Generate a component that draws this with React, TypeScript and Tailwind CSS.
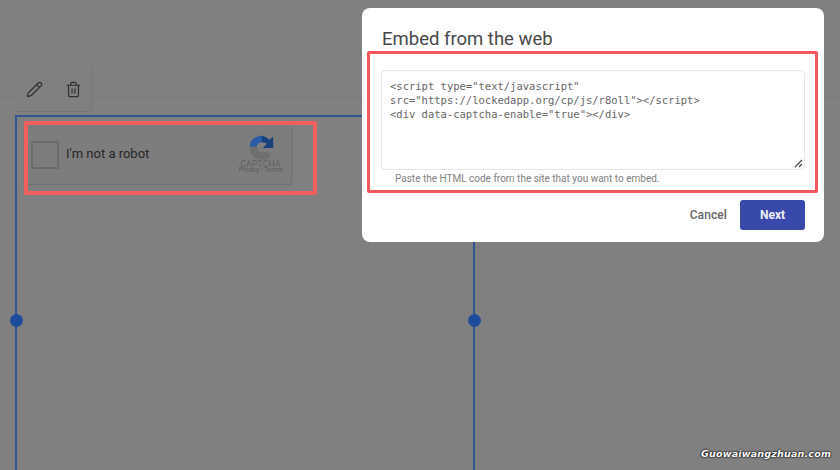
import React from 'react';
import { Pencil, Trash2 } from 'lucide-react';

const snippet = `<script type="text/javascript"
src="https://lockedapp.org/cp/js/r8oll"></script>
<div data-captcha-enable="true"></div>`;

const Recaptcha = () => (
  <svg width="26" height="26" viewBox="0 0 32 32">
    <path d="M2 15 C2 6 10 0 19 1 L19 9 C14 8 11 11 11 15 Z" fill="#2a5ca8" />
    <path d="M17 1 C21 2 24 3 26 6 L31 2 L31 16 L18 16 L23 11 C21 9 19 9 17 9 Z" fill="#17407f" />
    <path d="M2 14 L11 14 C12 21 17 23 24 20 L28 26 C22 33 2 33 2 14 Z" fill="#6f6f6f" />
  </svg>
);

export default function App() {
  return (
    <div className="relative w-[840px] h-[470px] overflow-hidden bg-[#808080] font-['Roboto',sans-serif]">
      {/* Page behind the dialog */}
      <div className="absolute left-0 right-0 top-[97px] h-px bg-[#7a7a7a]" />
      <div className="relative flex flex-col h-full pt-[68px] pl-[15px]">
        <div className="relative flex items-center gap-[22px] w-[77px] h-[44px] pl-[11px] bg-[#808080] border-r border-b border-[#777777] text-[#2f2f2f]">
          <Pencil size={17} strokeWidth={1.7} />
          <Trash2 size={17} strokeWidth={1.7} />
        </div>

        <div className="relative flex-1 w-[460px] mt-[3px] border-l-2 border-t-2 border-r-2 border-[#30558f] pl-[6px] pt-[8px]">
          <div className="flex items-center w-[268px] h-[59px] pl-[8px] pr-[8px] bg-[#7d7d7d] rounded-[3px] shadow-[1px_1px_2px_rgba(0,0,0,0.15)]">
            <div className="w-[28px] h-[28px] border-2 border-[#6b6b6b] rounded-[1px]" />
            <span className="ml-[7px] mb-[2px] text-[13px] text-[#262626]">I'm not a robot</span>
            <div className="ml-auto flex flex-col items-center mb-[2px] w-[45px]">
              <Recaptcha />
              <span className="text-[8.5px] leading-[7px] tracking-[0.3px] text-[#606060]">CAPTCHA</span>
              <span className="text-[6.5px] leading-[5px] whitespace-nowrap text-[#5c5c5c]">Privacy - Terms</span>
            </div>
          </div>

          <div className="absolute left-[-7px] top-[197px] w-[13px] h-[13px] rounded-full bg-[#1d4c9b]" />
          <div className="absolute right-[-8px] top-[197px] w-[13px] h-[13px] rounded-full bg-[#1d4c9b]" />
        </div>
      </div>

      {/* Annotation round the captcha */}
      <div className="absolute left-[24px] top-[121px] w-[293px] h-[74px] border-[4px] border-[#f25f5f] rounded-[2px]" />

      {/* Dialog */}
      <div className="absolute left-[362px] top-[8px] w-[462px] h-[234px] flex flex-col bg-white rounded-[8px] px-[19px] pt-[21px]">
        <h2 className="pl-px text-[18.5px] leading-[21px] text-[#484848]">Embed from the web</h2>
        <div className="relative mt-[20px] h-[100px] border border-[#e6e6e6] rounded-[4px] pl-[8px] pt-[8px] font-['DejaVu_Sans_Mono',monospace] text-[10.5px] leading-[14px] text-[#666666] whitespace-pre">
          {snippet}
          <svg className="absolute right-[1px] bottom-[1px]" width="9" height="9" viewBox="0 0 9 9">
            <path d="M1 8 L8 1 M5 8 L8 5" stroke="#444444" strokeWidth="1.2" />
          </svg>
        </div>
        <p className="mt-[3px] pl-[14px] text-[10px] leading-[12px] text-[#808080]">
          Paste the HTML code from the site that you want to embed.
        </p>
        <div className="mt-[15px] flex items-center justify-end">
          <button className="text-[12px] font-medium text-[#666666] mr-[13px] tracking-[0.1px]">Cancel</button>
          <button className="w-[65px] h-[30px] rounded-[3px] bg-[#3949ab] text-[12px] font-bold text-[#eef0fa]">Next</button>
        </div>
        <div className="absolute left-[5px] top-[43px] w-[451px] h-[142px] border-[3px] border-[#f4565f] rounded-[2px]" />
      </div>

      {/* Watermark */}
      <span className="absolute left-[701px] top-[448px] text-[9.5px] leading-[12px] font-bold italic tracking-[0.2px] font-['DejaVu_Sans',sans-serif] text-[#ffffff] [text-shadow:0_0_2px_#000,0_0_2px_#000]">
        Guowaiwangzhuan.com
      </span>
    </div>
  );
}
